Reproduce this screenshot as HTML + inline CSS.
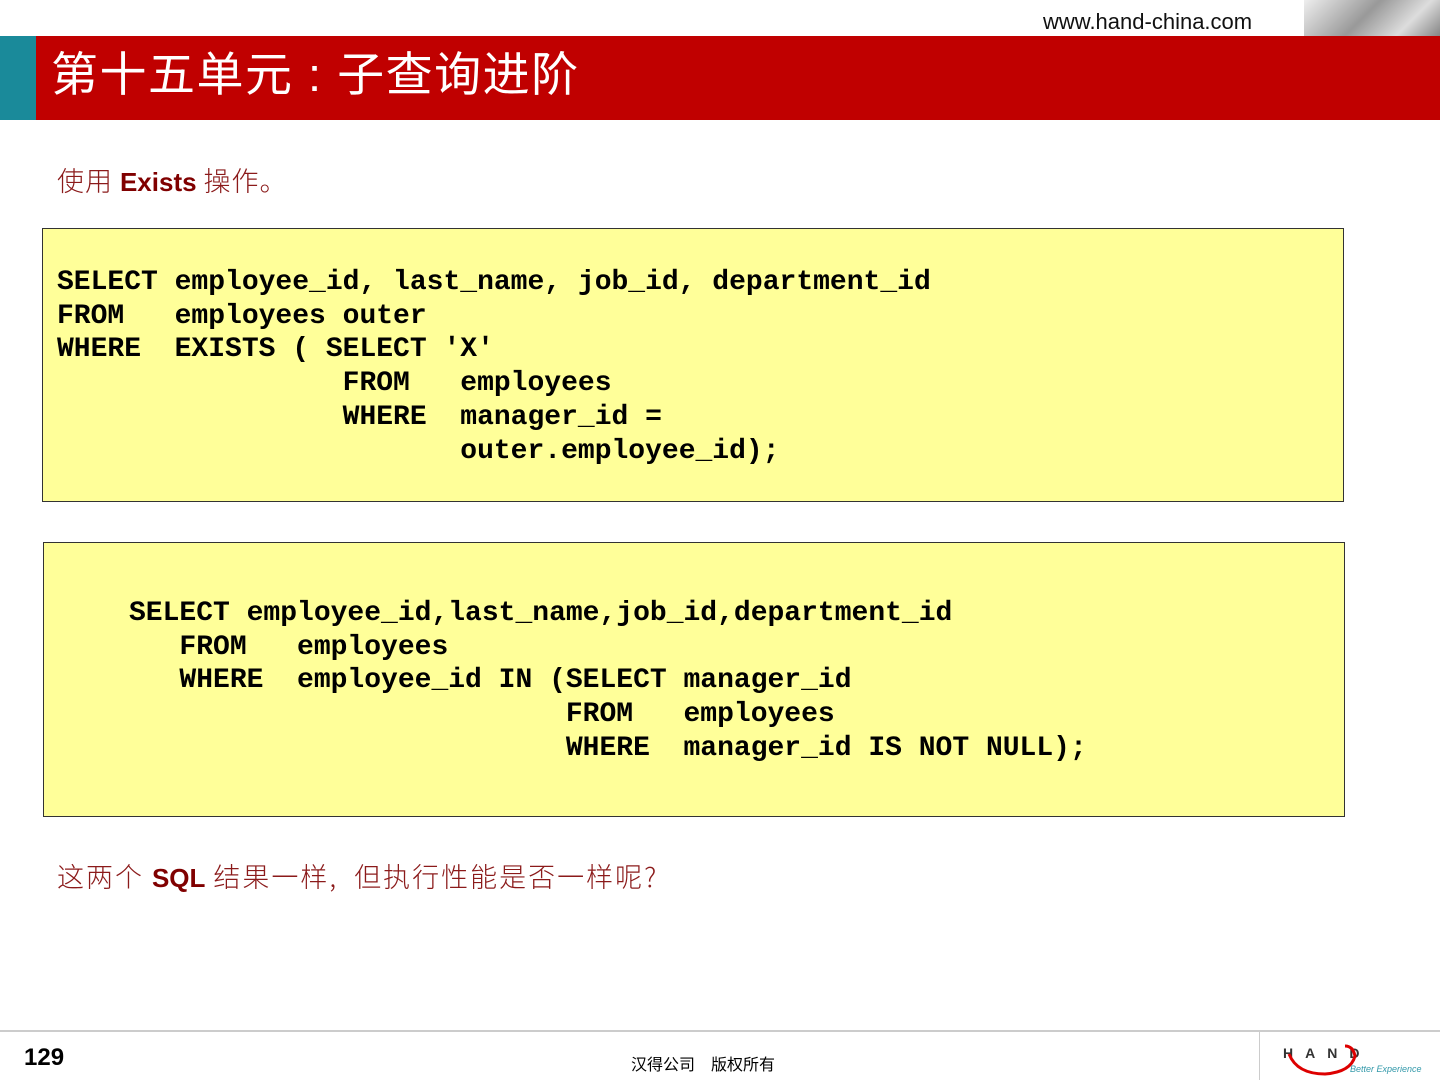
<!DOCTYPE html>
<html><head><meta charset="utf-8"><style>
body{margin:0;width:1440px;height:1080px;position:relative;background:#fff;overflow:hidden;font-family:"Liberation Sans","Noto Sans CJK SC",sans-serif}
.url{position:absolute;left:1043px;top:9px;font-size:22px;color:#111}
.photo{position:absolute;left:1304px;top:0;width:136px;height:120px;background:linear-gradient(135deg,#eee 0%,#999 30%,#ddd 50%,#777 70%,#bbb 100%)}
.teal{position:absolute;left:0;top:36px;width:36px;height:84px;background:#1a8a9a}
.bar{position:absolute;left:36px;top:36px;width:1404px;height:84px;background:#c00000}
.title{position:absolute;left:51px;top:45px;font-size:47px;letter-spacing:1.5px;color:#fff;font-family:"Liberation Sans","Noto Sans CJK SC",sans-serif;line-height:60px;white-space:pre}
.p{position:absolute;left:57px;font-size:27px;color:#8b1a1a;font-family:"Noto Sans CJK SC",sans-serif;font-weight:300;white-space:pre}
.p b{font-family:"Liberation Sans",sans-serif;color:#800000;font-weight:bold;font-size:26px;letter-spacing:0}
.box{position:absolute;background:#ffff99;border:1px solid #333;box-sizing:border-box}
pre{margin:0;position:absolute;font-family:"Liberation Mono",monospace;font-weight:bold;font-size:28px;line-height:33.7px;color:#000}
.foot{position:absolute;left:0;top:1030px;width:1440px;border-top:2px solid #ccc}
.num{position:absolute;left:24px;top:1044px;font-size:24px;font-weight:bold}
.copy{position:absolute;left:631px;top:1051px;font-size:16px;font-family:"Noto Sans CJK SC",sans-serif}
.vl{position:absolute;left:1259px;top:1032px;width:1px;height:48px;background:#ccc}
</style></head><body>
<div class="url">www.hand-china.com</div>
<div class="photo"></div>
<div class="teal"></div><div class="bar"></div>
<div class="title">第十五单元 : 子查询进阶</div>
<div class="p" style="top:160px;letter-spacing:1px">使用 <b>Exists</b> 操作。</div>
<div class="box" style="left:42px;top:228px;width:1302px;height:274px"></div>
<pre style="left:57px;top:266px">SELECT employee_id, last_name, job_id, department_id
FROM   employees outer
WHERE  EXISTS ( SELECT 'X'
                 FROM   employees
                 WHERE  manager_id =
                        outer.employee_id);</pre>
<div class="box" style="left:43px;top:542px;width:1302px;height:275px"></div>
<pre style="left:129px;top:597px">SELECT employee_id,last_name,job_id,department_id
   FROM   employees
   WHERE  employee_id IN (SELECT manager_id
                          FROM   employees
                          WHERE  manager_id IS NOT NULL);</pre>
<div class="p" style="top:856px;letter-spacing:2px">这两个 <b>SQL</b> 结果一样,  但执行性能是否一样呢?</div>
<div class="foot"></div>
<div class="num">129</div>
<div class="copy">汉得公司　版权所有</div>
<div class="vl"></div>
<div style="position:absolute;left:1283px;top:1045px;font-size:14px;font-weight:bold;letter-spacing:12px;color:#333">HAND</div>
<svg style="position:absolute;left:1285px;top:1040px" width="80" height="40"><path d="M4 14 Q12 34 40 34 Q66 32 70 16 Q68 6 60 6" stroke="#d00" stroke-width="3" fill="none"/></svg>
<div style="position:absolute;left:1350px;top:1064px;font-size:9px;font-style:italic;color:#39a;">Better Experience</div>
</body></html>
